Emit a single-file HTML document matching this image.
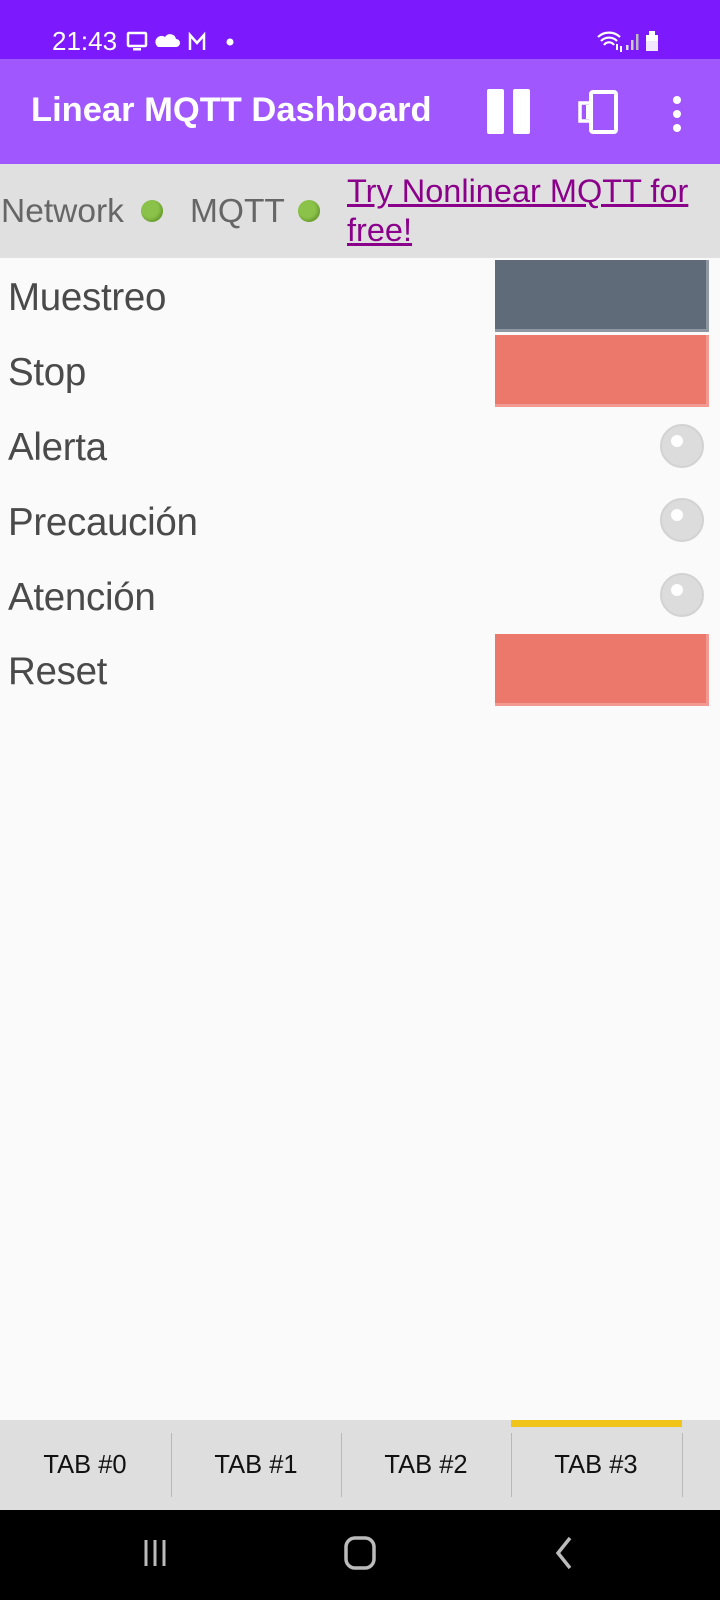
<!DOCTYPE html>
<html><head><meta charset="utf-8"><style>
*{margin:0;padding:0;box-sizing:border-box}
body{width:720px;height:1600px;position:relative;background:#fafafa;font-family:"Liberation Sans",Roboto,sans-serif;overflow:hidden}
.abs{position:absolute}
#sb{left:0;top:0;width:720px;height:59px;background:#7c19fd;color:#fff}
#ab{left:0;top:59px;width:720px;height:105px;background:#a057fd}
#gb{left:0;top:164px;width:720px;height:94px;background:#e0e0e0}
.lbl{position:absolute;left:8px;font-size:38.5px;color:#4a4a4a;letter-spacing:-0.3px}
.btn{position:absolute;left:495px;width:214px;height:72px}
.led{position:absolute;left:660px;width:44px;height:44px;border-radius:50%;background:#dcdcdc;border:2px solid #d2d2d2}
.led::after{content:"";position:absolute;left:9px;top:9px;width:12px;height:12px;border-radius:50%;background:#fff}
#tabs{left:0;top:1420px;width:720px;height:90px;background:#dedede}
.tab{position:absolute;top:0;height:90px;width:170px;font-size:25.5px;color:#111;text-align:center;line-height:90px}
.div{position:absolute;top:13px;width:1px;height:64px;background:#b8b8b8}
#nav{left:0;top:1510px;width:720px;height:90px;background:#000}
</style></head><body>
<div id="sb" class="abs">
<div class="abs" style="left:52px;top:26px;font-size:26px">21:43</div>
<svg class="abs" style="left:126px;top:30px" width="110" height="26" viewBox="0 0 110 26">
<rect x="2" y="3" width="18" height="13" rx="1" fill="none" stroke="#fff" stroke-width="2.5"/><rect x="7" y="18" width="8" height="2.5" fill="#fff"/>
<path d="M32 17h18a4 4 0 0 0 0-8 6 6 0 0 0-11-2 4 4 0 0 0-7 10z" fill="#fff"/>
<path d="M64 20V5l7 8 7-8v15" fill="none" stroke="#fff" stroke-width="2.5"/>
<circle cx="104" cy="12" r="3.5" fill="#fff"/></svg>
<svg class="abs" style="left:596px;top:28px" width="72" height="26" viewBox="0 0 72 26">
<path d="M2 9a16 16 0 0 1 22 0M5 13a11 11 0 0 1 16 0M8 17a6 6 0 0 1 10 0" fill="none" stroke="#fff" stroke-width="2.2"/>
<rect x="20" y="16" width="2" height="6" fill="#fff"/><rect x="24" y="18" width="2" height="6" fill="#fff"/>
<rect x="30" y="17" width="2.5" height="5" fill="#ddd"/><rect x="35" y="12" width="2.5" height="10" fill="#ccc"/><rect x="40" y="6" width="2.5" height="16" fill="#bbb"/>
<rect x="50" y="7" width="12" height="16" fill="#f2e6ff"/><rect x="53" y="3" width="6" height="4" fill="#fff"/><rect x="50" y="7" width="12" height="6" fill="#fff"/></svg>
</div>
<div id="ab" class="abs">
<div class="abs" style="left:31px;top:32px;font-size:34.5px;font-weight:bold;color:#fff">Linear MQTT Dashboard</div>
<div class="abs" style="left:487px;top:30px;width:17px;height:45px;background:#fff;border-radius:2px"></div>
<div class="abs" style="left:513px;top:30px;width:17px;height:45px;background:#fff;border-radius:2px"></div>
<svg class="abs" style="left:576px;top:30px" width="46" height="46" viewBox="0 0 46 46"><rect x="15" y="3" width="25" height="40" rx="2" fill="none" stroke="#fff" stroke-width="4"/><rect x="4" y="14" width="11" height="18" fill="none" stroke="#fff" stroke-width="3.5"/><rect x="10" y="16" width="4" height="14" fill="#fff"/></svg>
<div class="abs" style="left:673px;top:37px;width:8px;height:8px;border-radius:50%;background:#fff"></div>
<div class="abs" style="left:673px;top:51px;width:8px;height:8px;border-radius:50%;background:#fff"></div>
<div class="abs" style="left:673px;top:65px;width:8px;height:8px;border-radius:50%;background:#fff"></div>
</div>
<div id="gb" class="abs">
<div class="abs" style="left:1px;top:29px;font-size:33.5px;color:#666">Network</div>
<div class="abs" style="left:141px;top:36px;width:22px;height:22px;border-radius:50%;background:#8bc34a;box-shadow:inset -2px -2px 3px #6a9c30"></div>
<div class="abs" style="left:190px;top:29px;font-size:33.5px;color:#666">MQTT</div>
<div class="abs" style="left:298px;top:36px;width:22px;height:22px;border-radius:50%;background:#8bc34a;box-shadow:inset -2px -2px 3px #6a9c30"></div>
<div class="abs" style="left:347px;top:8px;width:373px;font-size:32.5px;line-height:39px;color:#8b008b;text-decoration:underline;white-space:nowrap">Try Nonlinear MQTT for<br>free!</div>
</div>
<div class="lbl" style="top:276px">Muestreo</div>
<div class="lbl" style="top:351px">Stop</div>
<div class="lbl" style="top:426px">Alerta</div>
<div class="lbl" style="top:501px">Precaución</div>
<div class="lbl" style="top:576px">Atención</div>
<div class="lbl" style="top:650px">Reset</div>
<div class="btn" style="top:260px;background:#5f6b78;border-right:3px solid #8f98a2;border-bottom:3px solid #8f98a2"></div>
<div class="btn" style="top:335px;background:#ec786c;border-right:3px solid #f29a92;border-bottom:3px solid #f29a92"></div>
<div class="led" style="top:424px"></div>
<div class="led" style="top:498px"></div>
<div class="led" style="top:573px"></div>
<div class="btn" style="top:634px;background:#ec786c;border-right:3px solid #f29a92;border-bottom:3px solid #f29a92"></div>
<div id="tabs" class="abs">
<div class="tab" style="left:0">TAB #0</div>
<div class="tab" style="left:171px">TAB #1</div>
<div class="tab" style="left:341px">TAB #2</div>
<div class="tab" style="left:511px">TAB #3</div>
<div class="div" style="left:171px"></div><div class="div" style="left:341px"></div><div class="div" style="left:511px"></div><div class="div" style="left:682px"></div>
<div class="abs" style="left:511px;top:0;width:171px;height:7px;background:#f0c419"></div>
</div>
<div id="nav" class="abs">
<svg class="abs" style="left:140px;top:20px" width="450" height="50" viewBox="0 0 450 50">
<path d="M6 10v26M15 10v26M24 10v26" stroke="#bbb" stroke-width="3"/>
<rect x="206" y="8" width="28" height="30" rx="9" fill="none" stroke="#bbb" stroke-width="3.5"/>
<path d="M430 8l-12 15 12 15" fill="none" stroke="#bbb" stroke-width="3.5"/>
</svg></div>
</body></html>
